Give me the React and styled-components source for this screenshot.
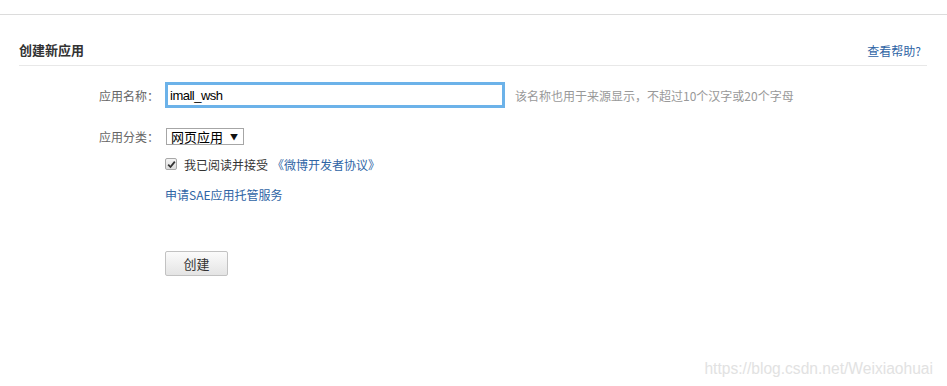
import React from 'react';
import styled, { createGlobalStyle } from 'styled-components';

const GlobalStyle = createGlobalStyle`
	html, body {
		margin: 0;
		padding: 0;
		background: #fff;
	}
	body {
		font-family: "Noto Sans CJK SC", "Liberation Sans", sans-serif;
		font-size: 12px;
		color: #333;
	}
`;

const App = () => {
	return (
		<Page>
			<GlobalStyle />
			<TopBar />
			<Content>
				<TitleRow>
					<Title>创建新应用</Title>
					<Link href="#">查看帮助?</Link>
				</TitleRow>
				<Form>
					<Row top={16} height={26}>
						<Label>应用名称：</Label>
						<NameInput defaultValue="imall_wsh" />
						<Hint>该名称也用于来源显示，不超过10个汉字或20个字母</Hint>
					</Row>
					<Row top={18} height={20}>
						<Label>应用分类：</Label>
						<SelectBox>
							网页应用
							<Arrow>▼</Arrow>
						</SelectBox>
					</Row>
					<Row top={8} height={20}>
						<Label />
						<CheckBox>
							<svg width="9" height="9" viewBox="0 0 9 9">
								<path d="M1.2 4.6 L3.5 7 L7.8 1.6" fill="none" stroke="#333" strokeWidth="1.8" />
							</svg>
						</CheckBox>
						<CheckText>我已阅读并接受</CheckText>
						<Link href="#">《微博开发者协议》</Link>
					</Row>
					<Row top={10} height={20}>
						<Label />
						<Link href="#">申请SAE应用托管服务</Link>
					</Row>
					<Row top={47} height={25}>
						<Label />
						<Button>创建</Button>
					</Row>
				</Form>
			</Content>
			<Watermark>https://blog.csdn.net/Weixiaohuai</Watermark>
		</Page>
	);
};

export default App;

const Page = styled.div`
	position: relative;
	width: 100%;
	height: 386px;
	overflow: hidden;
	background: #fff;
`;
const TopBar = styled.div`
	height: 14px;
	border-bottom: 1px solid #dcdcdc;
`;
const Content = styled.div`
	padding: 0 20px 0 19px;
`;
const TitleRow = styled.div`
	display: flex;
	justify-content: space-between;
	align-items: center;
	padding: 23px 6px 3px 0;
	height: 24px;
	border-bottom: 1px solid #e8e8e8;
`;
const Title = styled.h2`
	margin: 0;
	font-size: 13px;
	font-weight: bold;
	color: #333;
	line-height: 24px;
`;
const Link = styled.a`
	color: #2f65a5;
	text-decoration: none;
	font-size: 12px;
`;
const Form = styled.div`
	display: flex;
	flex-direction: column;
`;
const Row = styled.div`
	display: flex;
	align-items: center;
	margin-top: ${(p) => p.top}px;
	height: ${(p) => p.height}px;
`;
const Label = styled.span`
	width: 140px;
	margin-right: 6px;
	text-align: right;
	color: #666;
	font-size: 12px;
	flex-shrink: 0;
`;
const NameInput = styled.input`
	box-sizing: border-box;
	width: 340px;
	height: 26px;
	border: 3px solid #6cb2e9;
	padding: 0 2px;
	font-family: "Liberation Sans", Arial, sans-serif;
	font-size: 13px;
	letter-spacing: -0.5px;
	color: #000;
	outline: none;
`;
const Hint = styled.span`
	margin-left: 10px;
	color: #999;
	font-size: 12px;
`;
const SelectBox = styled.div`
	box-sizing: border-box;
	display: flex;
	align-items: center;
	width: 78px;
	height: 17px;
	margin-left: 1px;
	padding: 0 0 0 4px;
	border: 1px solid #a6a6a6;
	font-size: 13px;
	color: #000;
	line-height: 15px;
`;
const Arrow = styled.span`
	margin-left: 7px;
	font-size: 8px;
	color: #111;
`;
const CheckBox = styled.span`
	box-sizing: border-box;
	display: flex;
	align-items: center;
	justify-content: center;
	width: 12px;
	height: 12px;
	border: 1px solid #a8a8a8;
	border-radius: 2px;
	background: linear-gradient(#f4f4f4, #dcdcdc);
	margin-right: 7px;
`;
const CheckText = styled.span`
	color: #333;
	margin-right: 4px;
`;
const Button = styled.button`
	box-sizing: border-box;
	width: 63px;
	height: 25px;
	border: 1px solid #c2c2c2;
	border-radius: 2px;
	background: linear-gradient(#fbfbfb, #e4e4e4);
	font-family: "Noto Sans CJK SC", sans-serif;
	font-size: 13px;
	color: #333;
	padding: 0;
`;
const Watermark = styled.div`
	position: absolute;
	right: 14px;
	bottom: 8px;
	font-family: "Liberation Sans", Arial, sans-serif;
	font-size: 15.6px;
	color: #e2e2e2;
`;
